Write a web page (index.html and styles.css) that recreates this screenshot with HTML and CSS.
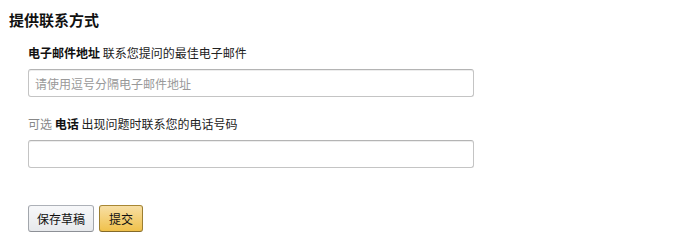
FILE: index.html
```html
<!DOCTYPE html>
<html lang="zh-CN">
<head>
    <meta charset="UTF-8">
    <meta name="viewport" content="width=device-width, initial-scale=1.0">
    <title>提供联系方式</title>
    <link rel="stylesheet" href="styles.css">
</head>
<body>
    <div class="contact">
        <h2>提供联系方式</h2>

        <form class="form">
            <div class="form-control">
                <label for="email"><b>电子邮件地址</b> 联系您提问的最佳电子邮件</label>
                <input type="text" id="email" placeholder="请使用逗号分隔电子邮件地址">
            </div>

            <div class="form-control">
                <label for="phone"><span class="optional">可选</span> <b>电话</b> 出现问题时联系您的电话号码</label>
                <input type="text" id="phone">
            </div>

            <div class="actions">
                <button type="button" class="btn">保存草稿</button>
                <button type="submit" class="btn btn-primary">提交</button>
            </div>
        </form>
    </div>
</body>
</html>
```

FILE: styles.css
```css
*{
    box-sizing: border-box;
}
body{
    margin: 0;
    background-color: #fff;
    color: #111;
    font-family: "Noto Sans CJK SC", "Liberation Sans", sans-serif;
    font-size: 12px;
}
.contact{
    padding: 10px 9px;
}
h2{
    margin: 0;
    font-size: 15px;
    line-height: 20px;
    font-weight: bold;
}
.form{
    padding-left: 19px;
    margin-top: 15px;
}
.form-control{
    margin-bottom: 19px;
}
.form-control label{
    display: block;
    line-height: 16px;
    margin-bottom: 8px;
    color: #222;
}
.form-control b{
    font-weight: bold;
    color: #111;
}
.form-control .optional{
    color: #888;
}
.form-control input{
    display: block;
    width: 446px;
    height: 28px;
    padding: 0 6px;
    border: 1px solid #c4c4c4;
    border-top-color: #b4b4b4;
    border-radius: 3px;
    box-shadow: 0 1px 0 rgba(255, 255, 255, 0.5), 0 1px 0 rgba(0, 0, 0, 0.07) inset;
    font-family: inherit;
    font-size: 12px;
    color: #111;
}
.form-control input::placeholder{
    color: #999;
}
.actions{
    display: flex;
    gap: 5px;
    margin-top: 37px;
}
.btn{
    height: 27px;
    padding: 0 8px;
    border: 1px solid #adb1b8;
    border-color: #adb1b8 #a2a6ac #8d9096;
    border-radius: 3px;
    background: linear-gradient(to bottom, #f7f8fa, #e7e9ec);
    color: #111;
    font-family: inherit;
    font-size: 12px;
    cursor: pointer;
}
.btn-primary{
    padding: 0 9px;
    border-color: #a88734 #9c7e31 #846a29;
    background: linear-gradient(to bottom, #f7dfa5, #f0c14b);
}
```
